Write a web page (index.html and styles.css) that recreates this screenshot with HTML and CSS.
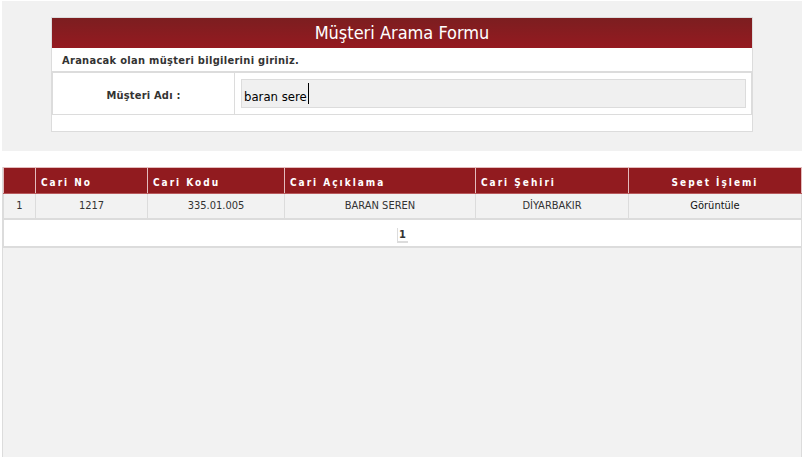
FILE: index.html
```html
<!DOCTYPE html>
<html lang="tr">
<head>
<meta charset="utf-8">
<title>Müşteri Arama Formu</title>
<link rel="stylesheet" href="styles.css">
</head>
<body>
<div class="search-panel">
  <div class="search-box">
    <div class="search-title">Müşteri Arama Formu</div>
    <div class="search-hint">Aranacak olan müşteri bilgilerini giriniz.</div>
    <div class="search-row">
      <div class="search-label">Müşteri Adı :</div>
      <div class="search-cell">
        <div class="search-field">baran sere<span class="caret"></span></div>
      </div>
    </div>
    <div class="search-foot"></div>
  </div>
</div>
<div class="grid">
  <table class="grid-table">
    <colgroup>
      <col class="c1"><col class="c2"><col class="c3"><col class="c4"><col class="c5"><col class="c6">
    </colgroup>
    <thead>
      <tr>
        <th></th>
        <th>Cari No</th>
        <th>Cari Kodu</th>
        <th>Cari Açıklama</th>
        <th>Cari Şehiri</th>
        <th class="center">Sepet İşlemi</th>
      </tr>
    </thead>
    <tbody>
      <tr class="data-row">
        <td>1</td>
        <td>1217</td>
        <td>335.01.005</td>
        <td>BARAN SEREN</td>
        <td>DİYARBAKIR</td>
        <td class="link">Görüntüle</td>
      </tr>
      <tr class="pager-row">
        <td colspan="6"><span class="page">1</span></td>
      </tr>
    </tbody>
  </table>
</div>
</body>
</html>
```

FILE: styles.css
```css
* { box-sizing: border-box; }
html, body { margin: 0; padding: 0; }
body {
  background: #ffffff;
  font-family: "DejaVu Sans Condensed", "DejaVu Sans", sans-serif;
  color: #333333;
  overflow: hidden;
  height: 457px;
}

.search-panel {
  margin: 1px 1px 0 2px;
  height: 150px;
  padding-top: 16px;
  background: #f1f1f1;
}
.search-box {
  width: 702px;
  margin: 0 auto;
  background: #ffffff;
  border: 1px solid #dcdcdc;
}
.search-title {
  height: 30px;
  line-height: 30px;
  text-align: center;
  color: #ffffff;
  font-size: 18px;
  background: linear-gradient(#7c1e20, #951a20);
}
.search-hint {
  height: 23px;
  line-height: 21px;
  padding: 2px 0 0 10px;
  font-size: 11px;
  font-weight: bold;
  letter-spacing: 0.3px;
  color: #333333;
}
.search-row {
  display: flex;
  height: 44px;
  border-top: 2px solid #dcdcdc;
  border-left: 1px solid #dcdcdc;
  border-right: 1px solid #dcdcdc;
  border-bottom: 1px solid #dcdcdc;
}
.search-label {
  width: 182px;
  border-right: 1px solid #dcdcdc;
  display: flex;
  align-items: center;
  justify-content: center;
  padding-top: 4px;
  font-size: 11px;
  font-weight: bold;
  letter-spacing: 0.2px;
  color: #333333;
}
.search-cell {
  flex: 1;
  padding: 6px 5px 0 6px;
}
.search-field {
  height: 29px;
  border: 1px solid #dcdcdc;
  background: #f0f0f0;
  padding-left: 2px;
  display: flex;
  align-items: center;
  padding-top: 6px;
  font-size: 13px;
  color: #000000;
}
.caret {
  display: inline-block;
  width: 1px;
  height: 21px;
  background: #000000;
  margin-left: 1px;
  margin-top: -6px;
}
.search-foot {
  height: 16px;
}

.grid {
  margin: 16px 1px 0 2px;
  height: 300px;
  background: #f2f2f2;
  border-left: 1px solid #dcdcdc;
  border-right: 1px solid #dcdcdc;
}
.grid-table {
  width: 100%;
  border-collapse: collapse;
  table-layout: fixed;
}
.c1 { width: 32px; }
.c2 { width: 112px; }
.c3 { width: 137px; }
.c4 { width: 191px; }
.c5 { width: 153px; }
.c6 { width: 173px; }

.grid-table th {
  height: 26px;
  padding: 3px 0 0 5px;
  background: #911b1f;
  color: #ffffff;
  border: 1px solid #e3bcbd;
  border-bottom-color: #b85a5d;
  text-align: left;
  font-size: 10px;
  font-weight: bold;
  letter-spacing: 2px;
}
.grid-table th.center {
  text-align: center;
  padding-left: 0;
}
.data-row td {
  height: 25px;
  padding: 0;
  background: #f2f2f2;
  border: 1px solid #dcdcdc;
  border-bottom: 2px solid #dcdcdc;
  text-align: center;
  font-size: 11px;
  color: #333333;
}
.data-row td.link { color: #111111; }
.pager-row td {
  height: 28px;
  padding: 0;
  background: #ffffff;
  border: 1px solid #dcdcdc;
  border-bottom: 2px solid #dcdcdc;
  text-align: center;
}
.page {
  display: inline-block;
  padding: 0 2px 0 1px;
  border-left: 1px solid #dcdcdc;
  border-bottom: 2px solid #dcdcdc;
  font-size: 11px;
  font-weight: bold;
  line-height: 13px;
  color: #333333;
}
```
